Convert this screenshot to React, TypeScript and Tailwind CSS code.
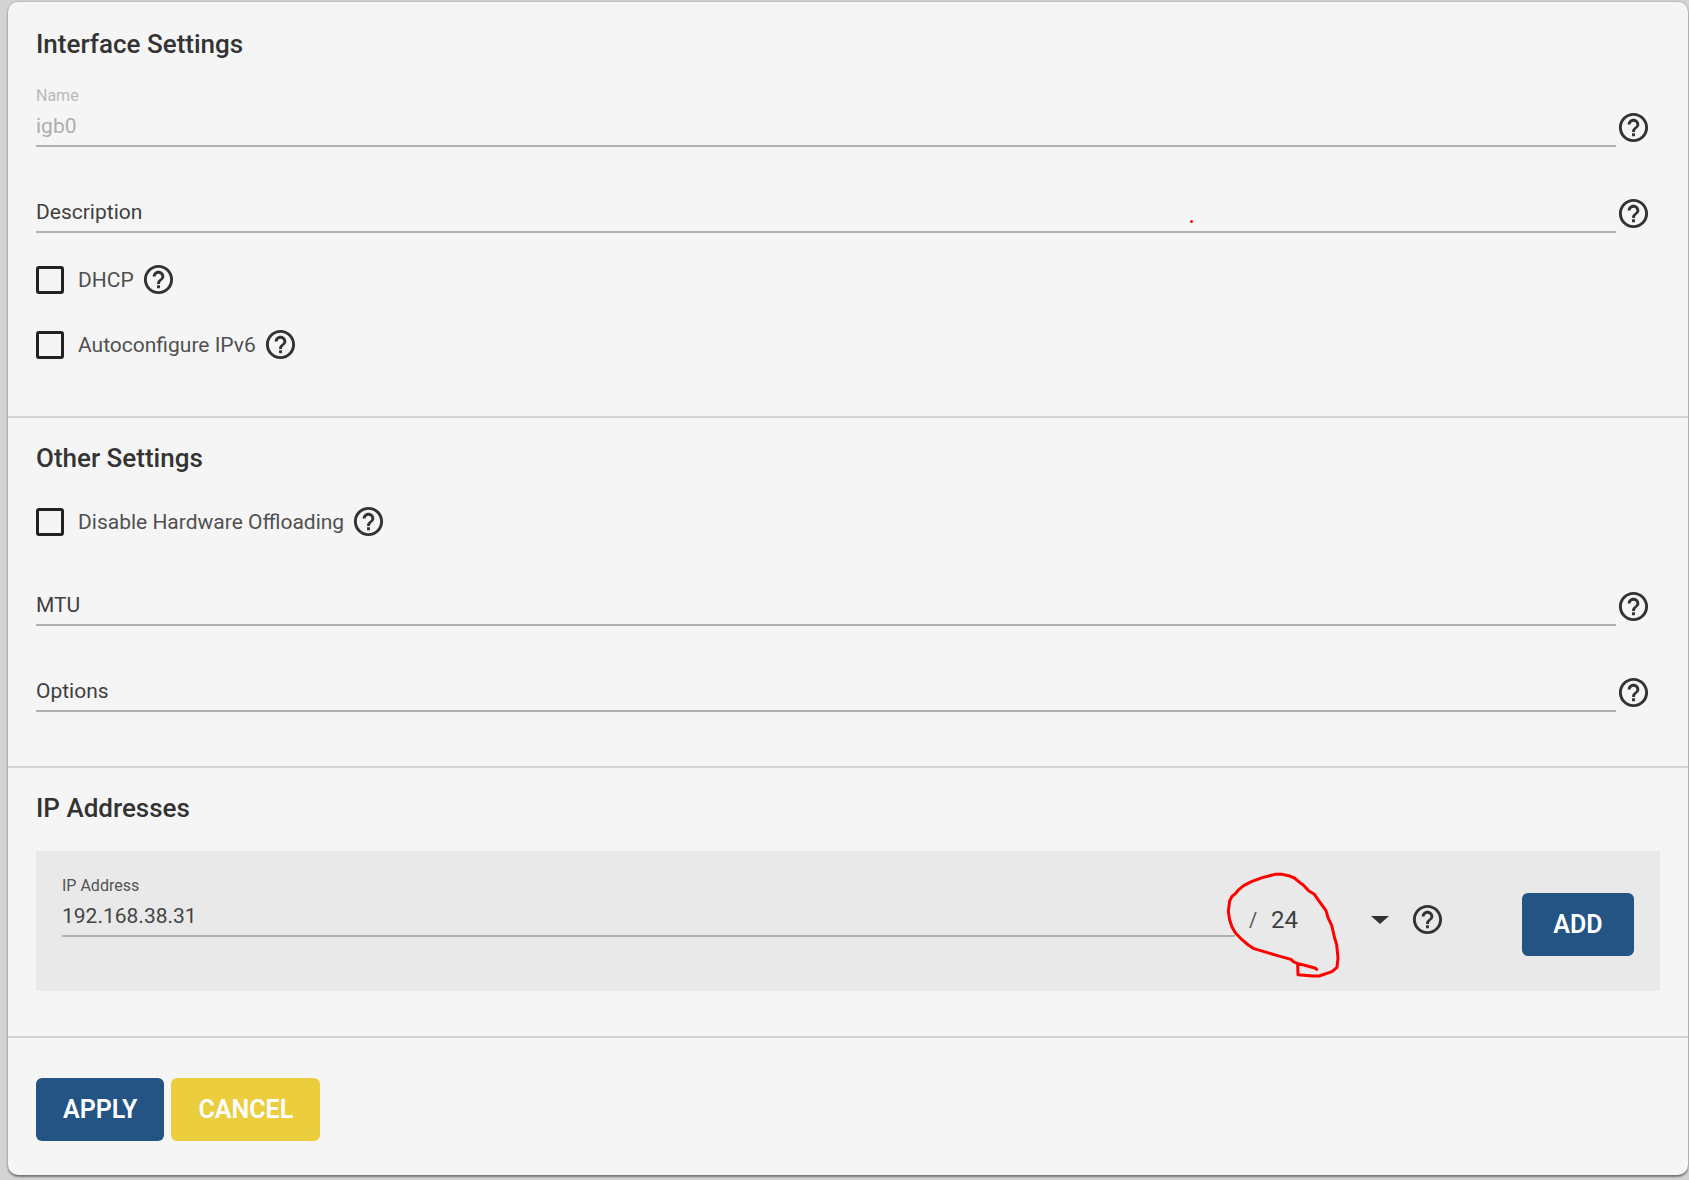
import type { ReactNode } from "react";

function HelpButton({ topic, className = "" }: { topic: string; className?: string }) {
  return (
    <button type="button" aria-label={`Help: ${topic}`} className={`size-[35px] shrink-0 text-[#333333] ${className}`}>
      <svg viewBox="0 0 24 24" fill="currentColor" className="size-full" aria-hidden="true">
        <path d="M11 18h2v-2h-2v2zm1-16C6.48 2 2 6.48 2 12s4.48 10 10 10 10-4.48 10-10S17.52 2 12 2zm0 18c-4.41 0-8-3.59-8-8s3.59-8 8-8 8 3.59 8 8-3.59 8-8 8zm0-14c-2.21 0-4 1.79-4 4h2c0-1.1.9-2 2-2s2 .9 2 2c0 2-3 1.75-3 5h2c0-2.25 3-2.5 3-5 0-2.21-1.79-4-4-4z" />
      </svg>
    </button>
  );
}

interface FieldProps {
  id: string;
  label: string;
  value?: string;
  disabled?: boolean;
  children?: ReactNode;
}

function TextField({ id, label, value = "", disabled = false, children }: FieldProps) {
  return (
    <div className="relative grid min-w-0 flex-1 grid-cols-1 grid-rows-[26px_35px]">
      <label
        htmlFor={id}
        className={
          value
            ? `col-start-1 row-start-1 text-base leading-5 ${disabled ? "text-[#b9b9b9]" : "text-[#535353]"}`
            : "pointer-events-none col-start-1 row-start-2 text-[21px] leading-7 text-[#3f3f3f]"
        }
      >
        {label}
      </label>
      <input
        id={id}
        type="text"
        defaultValue={value}
        disabled={disabled}
        className={`col-start-1 row-start-2 w-full min-w-0 border-b-2 border-[#b0b0b0] bg-transparent pb-[5px] text-[21px] leading-7 outline-none ${
          disabled ? "text-[#aeaeae]" : "text-[#444444]"
        }`}
      />
      {children}
    </div>
  );
}

function FieldRow(props: FieldProps) {
  return (
    <div className="flex items-end pr-[9px]">
      <TextField {...props} />
      <HelpButton topic={props.label} className="mb-0.5" />
    </div>
  );
}

function CheckRow({ id, label }: { id: string; label: string }) {
  return (
    <div className="flex h-[35px] items-center">
      <input
        id={id}
        type="checkbox"
        className="size-7 shrink-0 appearance-none rounded-[3px] border-3 border-[#212121] checked:bg-[#245483]"
      />
      <label htmlFor={id} className="pl-3.5 pr-[7px] text-[21px] leading-7 text-[#505050]">
        {label}
      </label>
      <HelpButton topic={label} />
    </div>
  );
}

function Heading({ children }: { children: ReactNode }) {
  return <h2 className="text-[26px] font-medium leading-8 text-[#333333]">{children}</h2>;
}

function ActionButton({ children, className }: { children: ReactNode; className: string }) {
  return (
    <button
      type="button"
      className={`h-[63px] min-w-28 shrink-0 rounded-md px-[27px] text-[25px] font-semibold text-white ${className}`}
    >
      {children}
    </button>
  );
}

export default function App() {
  return (
    <main className="bg-[#d3d3d3] pt-0.5 pr-px pb-[5px] pl-2 font-[Roboto,sans-serif]">
      <form className="rounded-[10px] bg-[#f5f5f5] shadow-[0_2px_2px_rgba(0,0,0,0.4),0_0_3px_rgba(0,0,0,0.2)]">
        <section className="px-7 pt-[26px] pb-[54px]">
          <Heading>Interface Settings</Heading>
          <div className="mt-[26px] flex flex-col gap-[25px]">
            <FieldRow id="name" label="Name" value="igb0" disabled />
            <FieldRow id="description" label="Description">
              <span className="absolute top-12 right-[423px] size-[3px] rounded-full bg-[#ff0000]" />
            </FieldRow>
          </div>
          <div className="mt-[29px] flex flex-col gap-[30px]">
            <CheckRow id="dhcp" label="DHCP" />
            <CheckRow id="ipv6" label="Autoconfigure IPv6" />
          </div>
        </section>

        <section className="border-t-2 border-[#d2d2d2] px-7 pt-6 pb-[54px]">
          <Heading>Other Settings</Heading>
          <div className="mt-[30px] flex flex-col">
            <CheckRow id="offloading" label="Disable Hardware Offloading" />
            <div className="mt-[26px] flex flex-col gap-[25px]">
              <FieldRow id="mtu" label="MTU" />
              <FieldRow id="options" label="Options" />
            </div>
          </div>
        </section>

        <section className="border-t-2 border-[#d2d2d2] px-7 pt-6 pb-[45px]">
          <Heading>IP Addresses</Heading>
          <div className="mt-[27px] flex items-start bg-[#e9e9e9] px-[26px] pt-[25px] pb-[35px]">
            <div className="flex min-w-0 flex-1 items-start">
              <TextField id="address" label="IP Address" value="192.168.38.31" />
              <div className="relative flex h-[78px] items-start pt-[26px]">
                <label htmlFor="netmask" aria-label="Netmask" className="w-9 pl-3.5 pt-0.5 text-xl leading-8 text-[#555555]">
                  /
                </label>
                <div className="grid w-[121px] grid-cols-1 items-center">
                  <select
                    id="netmask"
                    defaultValue="24"
                    className="col-start-1 row-start-1 h-9 appearance-none bg-transparent text-2xl leading-9 text-[#3f3f3f] outline-none"
                  >
                    <option>8</option>
                    <option>16</option>
                    <option>24</option>
                    <option>32</option>
                  </select>
                  <svg viewBox="0 0 18 8" className="pointer-events-none col-start-1 row-start-1 mr-[3px] h-2 w-[18px] justify-self-end" aria-hidden="true">
                    <path d="M0 0h18L9 8z" fill="#333333" />
                  </svg>
                </div>
                <svg
                  viewBox="135 84 360 336"
                  className="pointer-events-none absolute -top-2 -left-2.5 h-28 w-[120px]"
                  fill="none"
                  stroke="#ff0000"
                  strokeWidth="9"
                  strokeLinecap="round"
                  strokeLinejoin="round"
                  aria-hidden="true"
                >
                  <path d="M410 388L405 384L382 378L352 370L340 365L333 358L290 346L222 326L205 315L186 299L166 278L156 261L149 240L145 215L149 183L156 169L167 160L174 151L191 137L204 130L216 124L247 113L285 103L305 103L326 107L343 114L360 128L369 134L386 152L403 163L420 187L438 212L444 233L455 256L464 294L470 314L474 354L471 382L464 388L456 395L417 408L399 408L354 404L353 373" />
                </svg>
              </div>
              <HelpButton topic="IP Address" className="mt-[26px] ml-[18px]" />
            </div>
            <ActionButton className="mt-[17px] ml-[77px] bg-[#245483]">ADD</ActionButton>
          </div>
        </section>

        <footer className="flex gap-[7px] border-t-2 border-[#d2d2d2] px-7 pt-10 pb-[34px]">
          <ActionButton className="bg-[#245483]">APPLY</ActionButton>
          <ActionButton className="bg-[#ebcd3e]">CANCEL</ActionButton>
        </footer>
      </form>
    </main>
  );
}
